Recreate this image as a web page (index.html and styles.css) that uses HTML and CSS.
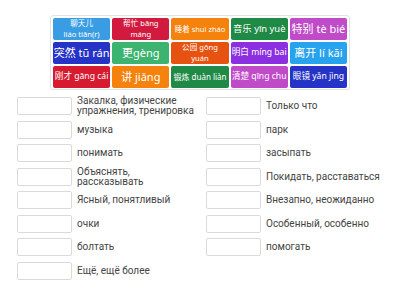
FILE: index.html
```html
<!DOCTYPE html>
<html lang="ru">
  <head>
    <meta charset="UTF-8" />
    <meta name="viewport" content="width=device-width, initial-scale=1.0" />
    <title>Match up</title>
    <link rel="stylesheet" href="styles.css">
  </head>
  <body>
    <div class="board">
      <div class="tile sky two">聊天儿<br />liáo tiān(r)</div>
      <div class="tile crimson two">帮忙 bāng<br />máng</div>
      <div class="tile orange xxs">睡着 shuì zháo</div>
      <div class="tile green md">音乐 yīn yuè</div>
      <div class="tile orchid lg">特别 tè bié</div>

      <div class="tile blue lg">突然 tū rán</div>
      <div class="tile mint lg">更gèng</div>
      <div class="tile tomato two">公园 gōng<br />yuán</div>
      <div class="tile violet sm">明白 míng bai</div>
      <div class="tile azure lg">离开 lí kāi</div>

      <div class="tile red sm">刚才 gāng cái</div>
      <div class="tile orange lg">讲 jiǎng</div>
      <div class="tile green xs">锻炼 duàn liàn</div>
      <div class="tile orchid sm">清楚 qīng chu</div>
      <div class="tile blue sm">眼镜 yǎn jìng</div>
    </div>

    <div class="pairs">
      <div class="col">
        <div class="pair"><span class="slot"></span><span class="label">Закалка, физические упражнения, тренировка</span></div>
        <div class="pair"><span class="slot"></span><span class="label">музыка</span></div>
        <div class="pair"><span class="slot"></span><span class="label">понимать</span></div>
        <div class="pair"><span class="slot"></span><span class="label">Объяснять,<br />рассказывать</span></div>
        <div class="pair"><span class="slot"></span><span class="label">Ясный, понятливый</span></div>
        <div class="pair"><span class="slot"></span><span class="label">очки</span></div>
        <div class="pair"><span class="slot"></span><span class="label">болтать</span></div>
        <div class="pair"><span class="slot"></span><span class="label">Ещё, ещё более</span></div>
      </div>
      <div class="col">
        <div class="pair"><span class="slot"></span><span class="label">Только что</span></div>
        <div class="pair"><span class="slot"></span><span class="label">парк</span></div>
        <div class="pair"><span class="slot"></span><span class="label">засыпать</span></div>
        <div class="pair"><span class="slot"></span><span class="label">Покидать, расставаться</span></div>
        <div class="pair"><span class="slot"></span><span class="label">Внезапно, неожиданно</span></div>
        <div class="pair"><span class="slot"></span><span class="label">Особенный, особенно</span></div>
        <div class="pair"><span class="slot"></span><span class="label">помогать</span></div>
      </div>
    </div>
  </body>
</html>
```

FILE: styles.css
```css
body {
  margin: 0;
  background: #fff;
  font-family: Roboto, "Noto Sans CJK SC", sans-serif;
}
.board {
  width: 294px;
  margin: 15px auto 0;
  padding: 2px 2px 1px;
  border: 1px solid #e3e3e3;
  border-radius: 3px;
  display: grid;
  grid-template-columns: repeat(5, 1fr);
  grid-auto-rows: 22px;
  gap: 2px;
}
.tile {
  display: flex;
  align-items: center;
  justify-content: center;
  text-align: center;
  color: #fff;
  border-radius: 2px;
  line-height: 1.12;
  white-space: nowrap;
  overflow: hidden;
  font-family: "Noto Sans", "Noto Sans CJK SC", sans-serif;
}
.two { font-size: 7.6px; line-height: 11px; }
.xxs { font-size: 7.5px; }
.xs { font-size: 8px; }
.sm { font-size: 8.6px; }
.md { font-size: 9.4px; }
.lg { font-size: 11px; }

.sky { background: #3a9de4; }
.crimson { background: #d11a3e; }
.orange { background: #f5820c; }
.green { background: #1f8a45; }
.orchid { background: #bf4bc8; }
.blue { background: #2533c6; }
.mint { background: #3cb36e; }
.tomato { background: #e6520f; }
.violet { background: #8b2fe0; }
.azure { background: #27a3ee; }
.red { background: #d61b31; }

.pairs {
  display: grid;
  grid-template-columns: 189px 189px;
  margin: 7px 0 0 17px;
}
.col {
  display: flex;
  flex-direction: column;
  gap: 5.5px;
}
.pair {
  display: flex;
  align-items: center;
  gap: 5px;
  height: 18px;
}
.slot {
  flex: none;
  width: 55px;
  height: 18px;
  box-sizing: border-box;
  border: 1px solid #dadada;
  border-radius: 2px;
  background: #fff;
}
.label {
  font-size: 10px;
  line-height: 10px;
  color: #444;
  max-width: 122px;
}
```
